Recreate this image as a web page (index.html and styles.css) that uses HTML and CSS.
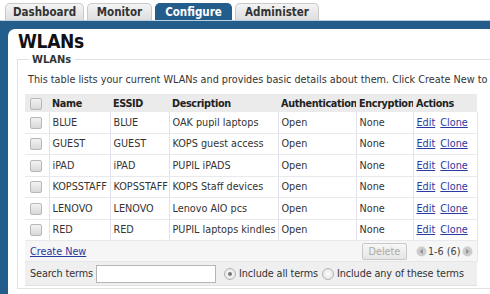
FILE: index.html
```html
<!DOCTYPE html>
<html>
<head>
<meta charset="utf-8">
<link rel="stylesheet" href="styles.css">
</head>
<body>
<div class="tabs">
  <div class="tab">Dashboard</div>
  <div class="tab">Monitor</div>
  <div class="tab active">Configure</div>
  <div class="tab">Administer</div>
</div>
<div class="frame">
  <div class="panel">
    <h1 class="title">WLANs</h1>
    <fieldset class="box">
      <legend class="legend">WLANs</legend>
      <p class="intro">This table lists your current WLANs and provides basic details about them. Click Create New to add a new WLAN.</p>
      <table class="grid">
        <colgroup>
          <col class="c-chk"><col class="c-name"><col class="c-essid"><col class="c-desc"><col class="c-auth"><col class="c-enc"><col class="c-act">
        </colgroup>
        <thead>
          <tr class="head">
            <th><span class="chk"></span></th><th>Name</th><th>ESSID</th><th>Description</th><th>Authentication</th><th>Encryption</th><th>Actions</th>
          </tr>
        </thead>
        <tbody>
          <tr><td><span class="chk"></span></td><td>BLUE</td><td>BLUE</td><td>OAK pupil laptops</td><td>Open</td><td>None</td><td><a class="lnk">Edit</a> <a class="lnk">Clone</a></td></tr>
          <tr><td><span class="chk"></span></td><td>GUEST</td><td>GUEST</td><td>KOPS guest access</td><td>Open</td><td>None</td><td><a class="lnk">Edit</a> <a class="lnk">Clone</a></td></tr>
          <tr><td><span class="chk"></span></td><td>iPAD</td><td>iPAD</td><td>PUPIL iPADS</td><td>Open</td><td>None</td><td><a class="lnk">Edit</a> <a class="lnk">Clone</a></td></tr>
          <tr><td><span class="chk"></span></td><td>KOPSSTAFF</td><td>KOPSSTAFF</td><td>KOPS Staff devices</td><td>Open</td><td>None</td><td><a class="lnk">Edit</a> <a class="lnk">Clone</a></td></tr>
          <tr><td><span class="chk"></span></td><td>LENOVO</td><td>LENOVO</td><td>Lenovo AIO pcs</td><td>Open</td><td>None</td><td><a class="lnk">Edit</a> <a class="lnk">Clone</a></td></tr>
          <tr><td><span class="chk"></span></td><td>RED</td><td>RED</td><td>PUPIL laptops kindles</td><td>Open</td><td>None</td><td><a class="lnk">Edit</a> <a class="lnk">Clone</a></td></tr>
        </tbody>
        <tfoot>
          <tr class="foot">
            <td colspan="7">
              <div class="footrow">
                <a class="lnk create">Create New</a>
                <div class="pager">
                  <button class="del" disabled>Delete</button>
                  <span class="arrow"><svg width="11" height="11" viewBox="0 0 11 11"><circle cx="5.5" cy="5.5" r="5" fill="#cdcdcd"/><path d="M6.8 2.8 L3.8 5.5 L6.8 8.2 Z" fill="#909090"/></svg></span>
                  <span class="count">1-6 (6)</span>
                  <span class="arrow"><svg width="11" height="11" viewBox="0 0 11 11"><circle cx="5.5" cy="5.5" r="5" fill="#cdcdcd"/><path d="M4.2 2.8 L7.2 5.5 L4.2 8.2 Z" fill="#909090"/></svg></span>
                </div>
              </div>
            </td>
          </tr>
          <tr class="search">
            <td colspan="7">
              <div class="searchrow">
                <label class="slabel">Search terms</label>
                <input class="sinput" type="text">
                <span class="radio on"></span><span class="rlabel">Include all terms</span>
                <span class="radio"></span><span class="rlabel">Include any of these terms</span>
              </div>
            </td>
          </tr>
        </tfoot>
      </table>
    </fieldset>
  </div>
</div>
</body>
</html>
```
FILE: styles.css
```css
html, body {
  margin: 0;
  padding: 0;
  background: #ffffff;
  overflow: hidden;
}
body {
  font-family: "DejaVu Sans Condensed", "DejaVu Sans", sans-serif;
  font-size: 10.75px;
  color: #222;
  width: 490px;
  height: 294px;
}
.tabs {
  display: flex;
  gap: 3px;
  padding: 3px 0 0 5px;
  height: 17px;
  border-bottom: 1px solid #b9cfe0;
}
.tab {
  height: 17px;
  box-sizing: border-box;
  border: 1px solid #c9c9c9;
  border-bottom: none;
  border-radius: 5px 5px 0 0;
  background: linear-gradient(#f4f4f4, #dedede);
  font-weight: bold;
  font-size: 11.5px;
  line-height: 17px;
  color: #333;
  display: flex;
  align-items: center;
  justify-content: center;
}
.tab:nth-child(1) { width: 79px; }
.tab:nth-child(2) { width: 65px; }
.tab:nth-child(3) { width: 77px; }
.tab:nth-child(4) { width: 84px; }
.tab.active {
  background: #235d8c;
  border-color: #235d8c;
  color: #fff;
}
.frame {
  background: #235d8c;
  padding: 8px 0 0 8px;
  height: 280px;
}
.panel {
  background: #fff;
  border-radius: 7px 0 0 0;
  height: 100%;
  padding: 1px 0 0 10px;
  box-sizing: border-box;
  width: 620px;
}
.title {
  margin: 0;
  font-size: 19px;
  font-weight: bold;
  color: #111;
  line-height: 22px;
  letter-spacing: -0.3px;
}
.box {
  margin: 1px 0 0 -1px;
  border: 1px solid #e2e2e2;
  border-right: none;
  padding: 0 0 2px 7px;
}
.legend {
  font-weight: bold;
  font-size: 11px;
  color: #333;
  padding: 0 3px;
  margin-left: 4px;
}
.intro {
  margin: 7px 0 7px 3px;
  white-space: nowrap;
  color: #333;
  line-height: 14px;
}
.grid {
  border-collapse: collapse;
  table-layout: fixed;
  width: 452px;
}
.c-chk { width: 24px; }
.c-name { width: 61px; }
.c-essid { width: 59px; }
.c-desc { width: 109px; }
.c-auth { width: 78px; }
.c-enc { width: 57px; }
.c-act { width: 64px; }
.grid th, .grid td {
  padding: 0 0 0 3px;
  height: 20.5px;
  text-align: left;
  white-space: nowrap;
  overflow: hidden;
  color: #333;
}
.grid th {
  font-weight: bold;
  background: #ebebeb;
  height: 18px;
  color: #222;
  letter-spacing: -0.35px;
}
.grid tbody td {
  border-bottom: 1px solid #e8e8ef;
  border-left: 1px solid #e0e0ee;
}
.grid tbody td:first-child { border-left: none; }
.grid tbody tr td:last-child { border-right: 1px solid #e6e6ee; }
.grid th:first-child, .grid td:first-child { padding-left: 5px; }
.chk {
  display: inline-block;
  width: 10px;
  height: 10px;
  border: 1px solid #b8b8b8;
  border-radius: 2px;
  background: linear-gradient(#f2f2f2, #d9d9d9);
  vertical-align: middle;
}
.lnk {
  color: #2a3aa0;
  text-decoration: underline;
  cursor: pointer;
}
.grid td .lnk + .lnk { margin-left: 2px; }
.foot td {
  background: #f6f6f6;
  height: 20px;
  padding: 0 4px 0 4px;
  border-bottom: 1px solid #e6e6ee;
  border-right: 1px solid #e6e6ee;
}
.footrow {
  display: flex;
  justify-content: space-between;
  align-items: center;
}
.pager {
  display: flex;
  align-items: center;
  color: #444;
}
.del {
  font-family: inherit;
  font-size: 10.75px;
  color: #aaa;
  background: linear-gradient(#f7f7f7, #e6e6e6);
  border: 1px solid #c8c8c8;
  border-radius: 2px;
  height: 17px;
  width: 45px;
  padding: 0;
  margin-right: 9px;
}
.arrow { display: inline-flex; }
.count { margin: 0 1px; }
.search td {
  background: #efefef;
  height: 23px;
  padding: 0 0 0 3px;
  border-bottom: 1px solid #e2e2e2;
}
.searchrow {
  display: flex;
  align-items: center;
  color: #333;
  letter-spacing: -0.1px;
}
.slabel { margin-right: 3px; }
.sinput {
  width: 120px;
  height: 18px;
  box-sizing: border-box;
  border: 1px solid #b5b5b5;
  background: #fff;
  margin: 0 8px 0 0;
  padding: 0;
}
.radio {
  display: inline-block;
  width: 10px;
  height: 10px;
  border-radius: 50%;
  border: 1px solid #b5b5b5;
  background: radial-gradient(#fff, #dcdcdc);
  margin-right: 3px;
  position: relative;
  flex: none;
}
.radio.on::after {
  content: "";
  position: absolute;
  left: 3px;
  top: 3px;
  width: 4px;
  height: 4px;
  border-radius: 50%;
  background: #777;
}
.rlabel { margin-right: 4px; }
```
